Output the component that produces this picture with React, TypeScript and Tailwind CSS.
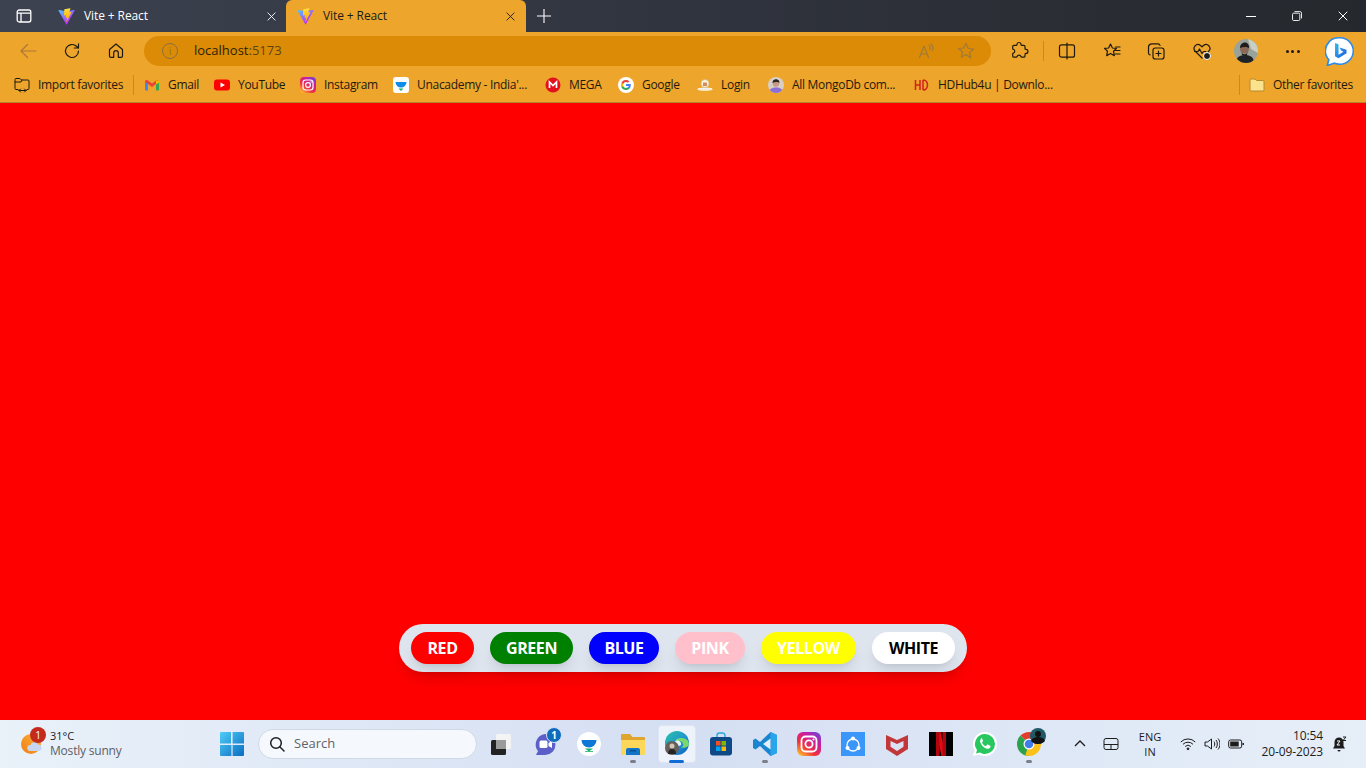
import React from "react";

const stroke = { fill: "none", stroke: "currentColor", strokeWidth: 1.2, strokeLinecap: "round", strokeLinejoin: "round" } as const;

function ViteLogo() {
  return (
    <svg viewBox="0 0 410 404" className="w-[17px] h-[17px] shrink-0">
      <defs>
        <linearGradient id="va" x1="6" y1="33" x2="235" y2="344" gradientUnits="userSpaceOnUse">
          <stop stopColor="#41D1FF" />
          <stop offset="1" stopColor="#BD34FE" />
        </linearGradient>
        <linearGradient id="vb" x1="194" y1="8" x2="236" y2="293" gradientUnits="userSpaceOnUse">
          <stop stopColor="#FFEA83" />
          <stop offset="0.08" stopColor="#FFDD35" />
          <stop offset="1" stopColor="#FFA800" />
        </linearGradient>
      </defs>
      <path d="M399.641 59.5246L215.643 388.545C211.844 395.338 202.084 395.378 198.228 388.618L10.5817 59.5563C6.38087 52.1896 12.6802 43.2665 21.0281 44.7586L205.223 77.6824C206.398 77.8924 207.601 77.8904 208.776 77.6763L389.119 44.8058C397.439 43.2894 403.768 52.1434 399.641 59.5246Z" fill="url(#va)" />
      <path d="M292.965 1.5744L156.801 28.2552C154.563 28.6937 152.906 30.5903 152.771 32.8664L144.395 174.33C144.198 177.662 147.258 180.248 150.51 179.498L188.42 170.749C191.967 169.931 195.172 173.055 194.443 176.622L183.18 231.775C182.422 235.487 185.907 238.661 189.532 237.56L212.947 230.446C216.577 229.344 220.065 232.527 219.297 236.242L201.398 322.875C200.278 328.294 207.486 331.249 210.492 326.603L212.5 323.5L323.454 102.072C325.312 98.3645 322.108 94.137 318.036 94.9228L279.014 102.454C275.347 103.161 272.227 99.746 273.262 96.1583L298.731 7.86689C299.767 4.27314 296.636 0.855181 292.965 1.5744Z" fill="url(#vb)" />
    </svg>
  );
}

function X({ className }: { className: string }) {
  return (
    <svg viewBox="0 0 10 10" className={className} {...stroke} strokeWidth={1}>
      <path d="M1 1l8 8M9 1l-8 8" />
    </svg>
  );
}

function I20({ children, className = "" }: { children: React.ReactNode; className?: string }) {
  return (
    <svg viewBox="0 0 20 20" className={"w-5 h-5 shrink-0 " + className} {...stroke}>
      {children}
    </svg>
  );
}

function TabStrip() {
  return (
    <div className="h-8 shrink-0 flex bg-gradient-to-r from-[#3c4250] via-[#30343e] to-[#25282d] text-white">
      <div className="w-12 h-8 flex items-center shrink-0">
        <svg viewBox="0 0 16 16" className="w-4 h-4 ml-4 shrink-0" fill="none" stroke="currentColor" strokeWidth="1.3">
          <rect x="1.2" y="2" width="13.6" height="12" rx="2" />
          <path d="M1.2 5.2h13.6M5 5.2V14" />
        </svg>
        <div className="w-px h-5 ml-4 bg-[#6a6f7a]" />
      </div>
      <div className="w-[238px] h-8 flex items-center shrink-0 pl-[10px] text-[12px] tracking-[-0.1px]">
        <ViteLogo />
        <span className="ml-[9px] w-[183px] whitespace-nowrap">Vite + React</span>
        <X className="w-[9px] h-[9px] text-white" />
      </div>
      <div className="w-[240px] h-8 flex items-center shrink-0 pl-[11px] text-[12px] tracking-[-0.1px] bg-[#eda52b] rounded-t-[6px] text-[#1c1c1c]">
        <ViteLogo />
        <span className="ml-[9px] w-[183px] whitespace-nowrap">Vite + React</span>
        <X className="w-[9px] h-[9px] text-[#1c1c1c]" />
      </div>
      <div className="w-[35px] flex items-center justify-center shrink-0">
        <svg viewBox="0 0 14 14" className="w-[14px] h-[14px]" fill="none" stroke="white" strokeWidth="1.1">
          <path d="M7 0v14M0 7h14" />
        </svg>
      </div>
      <div className="flex-1" />
      <div className="flex items-center shrink-0">
        <div className="w-[46px] flex justify-center">
          <div className="w-[10px] h-px bg-white" />
        </div>
        <div className="w-[46px] flex justify-center">
          <svg viewBox="0 0 10 10" className="w-[10px] h-[10px]" fill="none" stroke="white" strokeWidth="0.9">
            <rect x="0.5" y="2.2" width="7.3" height="7.3" rx="1.2" />
            <path d="M2.5 .6h5.4a1.6 1.6 0 0 1 1.6 1.6v5.2" />
          </svg>
        </div>
        <div className="w-[46px] flex justify-center">
          <X className="w-[10px] h-[10px] text-white" />
        </div>
      </div>
    </div>
  );
}

function Toolbar() {
  return (
    <div className="h-9 shrink-0 bg-[#eda52b] flex items-center pt-[2px] text-[#1f1a10]">
      <div className="w-[144px] flex items-center shrink-0">
        <div className="w-14 flex justify-center"><I20 className="text-[#a9783a]"><path d="M3 10h15M3 10l6.5-6.5M3 10l6.5 6.5" /></I20></div>
        <div className="w-[32px] flex justify-center"><I20><path d="M16.5 10a6.5 6.5 0 1 1-2-4.7L16.5 7M16.5 2.8V7h-4.2" /></I20></div>
        <div className="w-[56px] flex justify-center"><I20><path d="M3.5 8.5L10 3l6.5 5.5V15a1.3 1.3 0 0 1-1.3 1.3H12.300V12a2.300 2.300 0 0 0-4.600 0v4.300H4.800A1.300 1.300 0 0 1 3.500 15z" /></I20></div>
      </div>
      <div className="w-[847px] h-[30px] rounded-full bg-[#db8b06] flex items-center shrink-0">
        <div className="ml-[18px] w-4 h-4 rounded-full border border-[#8c7040] flex items-center justify-center text-[10px] leading-none text-[#8c7040] shrink-0">i</div>
        <span className="ml-[16px] text-[13px] whitespace-nowrap text-[#2b1f05]">localhost<span className="text-[#5c4614]">:5173</span></span>
        <div className="flex-1" />
        <svg viewBox="0 0 20 20" className="w-5 h-5 shrink-0 text-[#a07a3a]" {...stroke}>
          <path d="M3.500 16.500L8 5l4.500 11.500M5 13h6" />
          <path d="M13 4.500c1.500.8 1.500 3 .7 4M15 3c2.300 1.600 2.300 5 1.300 6.700" />
        </svg>
        <svg viewBox="0 0 20 20" className="w-5 h-5 ml-5 mr-[15px] shrink-0 text-[#a07a3a]" {...stroke}>
          <path d="M10 2.500l2.300 5 5.200.5-4 3.500 1.200 5.300L10 13.500 5.300 16.300l1.200-5.300-4-3.500 5.200-.5z" />
        </svg>
      </div>
      <div className="flex items-center flex-1 min-w-0">
        <div className="w-[56px] flex justify-center">
          <I20><path d="M8 3.500a2 2 0 0 1 4 0c0 .5.500.9 1 .9h1.800c.8 0 1.200.6 1.200 1.200v1.800c0 .5.400 1 .9 1a2 2 0 0 1 0 4c-.5 0-.9.500-.9 1v1.500c0 .8-.5 1.300-1.300 1.300h-2c-.4 0-.7-.3-.8-.7a2 2 0 0 0-3.800 0c-.1.400-.4.700-.8.700H5c-.8 0-1.300-.5-1.300-1.300v-2c0-.4.300-.7.700-.8a2 2 0 0 0 0-3.800c-.4-.1-.7-.4-.7-.8V5.600c0-.7.500-1.200 1.200-1.200H7c.5 0 1-.4 1-.9z" /></I20>
        </div>
        <div className="w-px h-5 bg-[#c48a30] ml-[-4px]" />
        <div className="w-[46px] flex justify-center">
          <I20><rect x="2.500" y="3.800" width="15" height="12.400" rx="2" /><path d="M10 2v16" /></I20>
        </div>
        <div className="w-[43px] flex justify-center">
          <I20><path d="M8.500 3l1.900 4 4.100.4-3 2.800.8 4.500-3.800-2.300-3.800 2.300.8-4.500-3-2.800 4.100-.4z" /><path d="M13 9.500h5M13.500 6h4.500M13 13h5" /></I20>
        </div>
        <div className="w-[46px] flex justify-center">
          <I20><rect x="7" y="7" width="11" height="11" rx="2.300" /><path d="M12.500 10v5M10 12.500h5M14 4.500c-.2-1-1-1.700-2-1.700H6A3.500 3.500 0 0 0 2.500 6.300V12c0 1 .7 1.800 1.700 2" /></I20>
        </div>
        <div className="w-[45px] flex justify-center relative">
          <I20><path d="M10 17L3.500 10.500A4 4 0 0 1 3 5a4 4 0 0 1 5.500-.5L10 5.800l1.500-1.300A4 4 0 0 1 17 5a4 4 0 0 1-.5 5.500l-.8.800" /><path d="M2.500 10.500h3.500l1.500-2.500 2.500 4.500 1.500-2H14" /></I20>
          <div className="absolute left-[24px] top-[11px] w-2 h-2 rounded-full bg-[#1c1c1c] border border-white" />
        </div>
        <div className="w-[44px] flex justify-center">
          <svg viewBox="0 0 24 24" className="w-6 h-6 shrink-0">
            <defs><clipPath id="avc"><circle cx="12" cy="12" r="12" /></clipPath></defs>
            <circle cx="12" cy="12" r="12" fill="#9aa39a" />
            <g clipPath="url(#avc)">
              <path d="M14 0h10v14l-7-4z" fill="#c8cfc4" />
              <path d="M2 24c0-6 4-8 9-8s9 2 9 8z" fill="#202326" />
              <circle cx="10.500" cy="10" r="4.500" fill="#8a6a56" />
              <path d="M6 9c0-4 3-5.500 5-5.500s4.500 2 4 5.500c-2-1.500-6-1.500-9 0z" fill="#1f1c1b" />
              <path d="M7.500 13c1 3 5 3 6 0l-.5 3h-5z" fill="#26201d" />
            </g>
          </svg>
        </div>
        <div className="w-[49px] flex justify-center">
          <div className="flex gap-[2.500px]">
            <div className="w-[3px] h-[3px] rounded-full bg-[#1f1a10]" />
            <div className="w-[3px] h-[3px] rounded-full bg-[#1f1a10]" />
            <div className="w-[3px] h-[3px] rounded-full bg-[#1f1a10]" />
          </div>
        </div>
        <div className="w-[45px] flex justify-center">
          <svg viewBox="0 0 30 30" className="w-[30px] h-[30px] shrink-0">
            <defs>
              <linearGradient id="bg" x1="0" y1="0" x2="1" y2="1">
                <stop stopColor="#36bbf0" />
                <stop offset="1" stopColor="#1c5ad8" />
              </linearGradient>
            </defs>
            <path d="M15 1a14 14 0 0 1 0 28c-2 0-4-.4-5.500-1l-7 2.300c-.6.200-1.200-.3-1-1l1.300-5.500A14 14 0 0 1 15 1z" fill="#2d8ce8" />
            <path d="M15 2.500a12.500 12.500 0 0 1 0 25c-2 0-3.800-.5-5.500-1.200l-6 1.900 1.200-4.700A12.500 12.500 0 0 1 15 2.500z" fill="#ffffff" />
            <path d="M10 7l3.500 1.300v10.500l5-3-2.500-1.200-1.300-3.200 6.800 2.400v3.500l-8 5-3.500-2z" fill="url(#bg)" />
          </svg>
        </div>
      </div>
    </div>
  );
}

const FolderImport = () => (
  <svg viewBox="0 0 16 16" className="w-4 h-4 shrink-0 text-[#1c1a14]" {...stroke} strokeWidth={1}>
    <path d="M4 12.500H2a1 1 0 0 1-1-1V2.500a1 1 0 0 1 1-1h4l1.500 1.500H14a1 1 0 0 1 1 1v7.500a1 1 0 0 1-1 1h-1" />
    <path d="M1 5h6l1-2" />
    <path d="M5 13.500h7M5 13.500l1.500-1.500M5 13.500L6.500 15M12 13.500L10.500 12M12 13.500L10.500 15" />
  </svg>
);
const Gmail = () => (
  <svg viewBox="0 0 16 16" className="w-4 h-4 shrink-0">
    <path d="M1 13.500V4l3 2v7.500H2a1 1 0 0 1-1-1z" fill="#4285f4" />
    <path d="M15 13.500V4l-3 2v7.500h2a1 1 0 0 0 1-1z" fill="#34a853" />
    <path d="M1 4.500C1 3 2.500 2.500 3.500 3.200L8 6.500l4.500-3.300C13.500 2.500 15 3 15 4.500L12 7 8 10 4 7z" fill="#ea4335" />
    <path d="M12 3.600L15 3.500V5.500L12 7.500z" fill="#fbbc04" />
  </svg>
);
const YouTube = () => (
  <svg viewBox="0 0 16 16" className="w-4 h-4 shrink-0">
    <rect x="0" y="2.500" width="16" height="11" rx="3" fill="#ff0000" />
    <path d="M6.500 5.500l4.500 2.500-4.500 2.500z" fill="#fff" />
  </svg>
);
const InstaGrad = ({ id, className }: { id: string; className: string }) => (
  <svg viewBox="0 0 24 24" className={className}>
    <defs>
      <linearGradient id={id} x1="0.1" y1="1" x2="0.9" y2="0">
        <stop stopColor="#fdc52f" />
        <stop offset="0.35" stopColor="#f0323c" />
        <stop offset="0.7" stopColor="#c71ea5" />
        <stop offset="1" stopColor="#6a47d8" />
      </linearGradient>
    </defs>
    <rect width="24" height="24" rx="6" fill={`url(#${id})`} />
    <rect x="4.500" y="4.500" width="15" height="15" rx="4" fill="none" stroke="#fff" strokeWidth="1.800" />
    <circle cx="12" cy="12" r="3.600" fill="none" stroke="#fff" strokeWidth="1.800" />
    <circle cx="16.500" cy="7.500" r="1.100" fill="#fff" />
  </svg>
);
const Unacademy = () => (
  <svg viewBox="0 0 16 16" className="w-4 h-4 shrink-0">
    <rect width="16" height="16" rx="3" fill="#fff" />
    <path d="M2.500 5h11a5.500 5.500 0 0 1-11 0z" fill="#0f8ce9" />
    <path d="M5.500 11.500h5L8 14z" fill="#18b36b" />
  </svg>
);
const Mega = () => (
  <svg viewBox="0 0 16 16" className="w-4 h-4 shrink-0">
    <circle cx="8" cy="8" r="7.500" fill="#e3101e" />
    <path d="M4.500 11V5l3.500 3.500L11.500 5v6" fill="none" stroke="#fff" strokeWidth="1.700" />
  </svg>
);
const Google = () => (
  <svg viewBox="0 0 16 16" className="w-4 h-4 shrink-0">
    <circle cx="8" cy="8" r="8" fill="#fff" />
    <path d="M12.800 8.100c0-.4 0-.7-.1-1H8v1.900h2.700c-.1.700-.5 1.200-1 1.500v1.300h1.600c1-.9 1.500-2.200 1.500-3.700z" fill="#4285f4" />
    <path d="M8 13c1.300 0 2.400-.4 3.300-1.200l-1.600-1.300c-.4.300-1 .5-1.700.5-1.300 0-2.400-.9-2.800-2H3.500v1.300C4.300 12 6 13 8 13z" fill="#34a853" />
    <path d="M5.200 9c-.2-.6-.2-1.300 0-2V5.700H3.500a5 5 0 0 0 0 4.600z" fill="#fbbc04" />
    <path d="M8 5c.7 0 1.400.3 1.900.7l1.400-1.400A5 5 0 0 0 3.500 5.700L5.200 7C5.600 5.800 6.700 5 8 5z" fill="#ea4335" />
  </svg>
);
const Login = () => (
  <svg viewBox="0 0 16 16" className="w-4 h-4 shrink-0">
    <path d="M0 12.500c2-1.500 4-2 8-2s6 .5 8 2c-2 1-5 1.500-8 1.500s-6-.5-8-1.500z" fill="#f7e5b5" />
    <circle cx="8" cy="6.500" r="4" fill="#fff6df" stroke="#c9b27e" strokeWidth="0.700" />
    <rect x="6" y="5.500" width="4" height="3.500" fill="#d18d5b" />
    <path d="M1 11h14v1.500H1z" fill="#f3f1ea" />
  </svg>
);
const Mongo = () => (
  <svg viewBox="0 0 16 16" className="w-4 h-4 shrink-0">
    <defs><clipPath id="mc"><circle cx="8" cy="8" r="8" /></clipPath></defs>
    <circle cx="8" cy="8" r="8" fill="#d8cfc6" />
    <g clipPath="url(#mc)">
      <path d="M1 16c0-4 3-5.500 7-5.500s7 1.500 7 5.500z" fill="#8a6fd8" />
      <circle cx="8" cy="6.500" r="3.200" fill="#c89a80" />
      <path d="M4.500 6c0-3 2-3.800 3.500-3.800S11.500 3 11.500 6c-1.500-1.200-5-1.200-7 0z" fill="#2a2220" />
    </g>
  </svg>
);
const HD = () => (
  <svg viewBox="0 0 16 16" className="w-4 h-4 shrink-0" fill="none" stroke="#d4201a" strokeWidth="1.500">
    <path d="M1.500 3v10M6 3v10M1.500 8H6M9 3v10M9 3c6 0 6 10 0 10" />
  </svg>
);
const FolderYellow = () => (
  <svg viewBox="0 0 16 16" className="w-4 h-4 shrink-0">
    <path d="M1 3a1 1 0 0 1 1-1h4l1.500 1.500H14a1 1 0 0 1 1 1v8.500a1 1 0 0 1-1 1H2a1 1 0 0 1-1-1z" fill="#fbe38e" stroke="#b8892f" strokeWidth="1" />
  </svg>
);

const bookmarks = [
  { label: "Gmail", icon: <Gmail />, w: "w-[46px]" },
  { label: "YouTube", icon: <YouTube />, w: "w-[62px]" },
  { label: "Instagram", icon: <InstaGrad id="ibm" className="w-4 h-4 shrink-0" />, w: "w-[69px]" },
  { label: "Unacademy - India'...", icon: <Unacademy />, w: "w-[128px]" },
  { label: "MEGA", icon: <Mega />, w: "w-[49px]" },
  { label: "Google", icon: <Google />, w: "w-[55px]" },
  { label: "Login", icon: <Login />, w: "w-[47px]" },
  { label: "All MongoDb com...", icon: <Mongo />, w: "w-[122px]" },
  { label: "HDHub4u | Downlo...", icon: <HD />, w: "w-[136px]" },
];

function Bookmark({ icon, label, w }: { icon: React.ReactNode; label: string; w: string }) {
  return (
    <div className="flex items-center shrink-0">
      {icon}
      <span className={"ml-2 whitespace-nowrap " + w}>{label}</span>
    </div>
  );
}

function BookmarksBar() {
  return (
    <div className="h-[35px] shrink-0 bg-[#eda52b] border-b border-[#b9842b] flex items-center pl-[14px] text-[12px] tracking-[-0.3px] text-[#1f1a10]">
      <Bookmark icon={<FolderImport />} label="Import favorites" w="w-[85px]" />
      <div className="w-px h-5 bg-[#c48a30] mx-[10px] shrink-0" />
      <div className="flex">
        {bookmarks.map((b) => <Bookmark key={b.label} {...b} />)}
      </div>
      <div className="flex-1" />
      <div className="w-px h-5 bg-[#c48a30] mr-[9px] shrink-0" />
      <Bookmark icon={<FolderYellow />} label="Other favorites" w="w-[93px]" />
    </div>
  );
}

const colors = [
  { n: "RED", c: "bg-[#ff0000] text-white", w: "w-[63px]" },
  { n: "GREEN", c: "bg-[#008000] text-white", w: "w-[83px]" },
  { n: "BLUE", c: "bg-[#0000ff] text-white", w: "w-[70px]" },
  { n: "PINK", c: "bg-[#ffc0cb] text-white", w: "w-[70px]" },
  { n: "YELLOW", c: "bg-[#ffff00] text-white", w: "w-[95px]" },
  { n: "WHITE", c: "bg-white text-black", w: "w-[83px]" },
];

function Stage() {
  return (
    <div className="flex-1 min-h-0 bg-[#ff0000] flex items-end justify-center pb-12">
      <div className="flex items-center gap-4 h-12 px-3 rounded-3xl bg-[#dfe5ef] shadow-lg">
        {colors.map((c) => (
          <button key={c.n} className={"h-8 rounded-full shadow-lg font-bold text-[16px] tracking-[-0.4px] flex items-center justify-center " + c.c + " " + c.w}>
            {c.n}
          </button>
        ))}
      </div>
    </div>
  );
}

const Slot = ({ children, className = "" }: { children: React.ReactNode; className?: string }) => (
  <div className={"relative w-11 h-12 flex items-center justify-center shrink-0 " + className}>{children}</div>
);
const Pip = () => <div className="absolute bottom-[5px] left-[19px] w-[6px] h-[3px] rounded-full bg-[#7a7f88]" />;

function Taskbar() {
  return (
    <div className="h-12 shrink-0 flex items-center bg-gradient-to-r from-[#e9f1f9] via-[#d5dff3] to-[#e6eff8] text-[#1c1c1c]">
      <div className="w-[210px] h-12 flex items-center pl-[21px] shrink-0">
        <div className="relative w-[22px] h-[22px] shrink-0">
          <svg viewBox="0 0 22 22" className="w-[22px] h-[22px]">
            <defs>
              <linearGradient id="sun" x1="0" y1="1" x2="1" y2="0">
                <stop stopColor="#ef7d12" />
                <stop offset="1" stopColor="#fcb53a" />
              </linearGradient>
            </defs>
            <circle cx="10" cy="11" r="10" fill="url(#sun)" />
            <path d="M9 18a3 3 0 0 1 .5-6 4 4 0 0 1 7.500-.5 3.300 3.300 0 0 1 1 6.500z" fill="#c6d6f2" />
          </svg>
          <div className="absolute left-[9px] top-[-6px] w-4 h-4 rounded-full bg-[#c42b1c] text-white text-[10px] flex items-center justify-center leading-none">1</div>
        </div>
        <div className="ml-[7px] mt-[-2px] leading-[15px] text-[11px] whitespace-nowrap">
          <div className="text-[#1c1c1c]">31°C</div>
          <div className="text-[#5d5f66] text-[12px] tracking-[-0.2px]">Mostly sunny</div>
        </div>
      </div>
      <Slot>
        <svg viewBox="0 0 24 24" className="w-6 h-6">
          <defs>
            <linearGradient id="win" x1="0" y1="0" x2="1" y2="1">
              <stop stopColor="#4fcdf7" />
              <stop offset="1" stopColor="#0a6cc2" />
            </linearGradient>
          </defs>
          <path d="M0 1a1 1 0 0 1 1-1h10v11.400H0zM12.600 0H23a1 1 0 0 1 1 1v10.400H12.600zM0 13h11.400v11H1a1 1 0 0 1-1-1zM12.600 13H24v10a1 1 0 0 1-1 1H12.600z" fill="url(#win)" />
        </svg>
      </Slot>
      <div className="ml-1 mr-[2px] w-[219px] h-[30px] rounded-full bg-[#f5f8fd] border border-[#d2d9e6] flex items-center pl-[10px] shrink-0">
        <svg viewBox="0 0 16 16" className="w-4 h-4 shrink-0" fill="none" stroke="#1c1c1c" strokeWidth="1.500" strokeLinecap="round">
          <circle cx="7" cy="7" r="5.300" />
          <path d="M11 11l4 4" />
        </svg>
        <span className="ml-[9px] text-[13px] text-[#5f6368]">Search</span>
      </div>
      <Slot>
        <svg viewBox="0 0 24 24" className="w-6 h-6">
          <rect x="7" y="2" width="15" height="15" rx="1.500" fill="#f4f4f4" />
          <rect x="2" y="8" width="15" height="15" rx="1.500" fill="#222" />
          <rect x="7" y="8" width="10" height="9" fill="#9b9b9b" />
        </svg>
      </Slot>
      <Slot>
        <svg viewBox="0 0 24 24" className="w-6 h-6">
          <path d="M12 2a10.500 10.500 0 0 1 0 21H3l2-4A10.500 10.500 0 0 1 12 2z" fill="#5b5fc7" />
          <rect x="6.500" y="8.500" width="8" height="7.500" rx="1.500" fill="#fff" />
          <path d="M15.500 11l3.500-2v7l-3.500-2z" fill="#fff" />
        </svg>
        <div className="absolute left-[23px] top-[7px] w-4 h-4 rounded-full bg-[#0f6cbd] border border-[#d8e2f4] text-white text-[10px] font-bold flex items-center justify-center leading-none">1</div>
      </Slot>
      <Slot>
        <svg viewBox="0 0 24 24" className="w-6 h-6">
          <circle cx="12" cy="12" r="12" fill="#fff" />
          <path d="M4.500 8h15a7.500 7.500 0 0 1-15 0z" fill="#0f78d6" />
          <path d="M8 16.500h8L12 19.500z" fill="#18b36b" />
          <path d="M8 19h8v.800H8z" fill="#18b36b" />
        </svg>
      </Slot>
      <Slot>
        <svg viewBox="0 0 24 24" className="w-6 h-6">
          <path d="M0 3a1 1 0 0 1 1-1h8l2.500 3H23a1 1 0 0 1 1 1v3H0z" fill="#e0a52d" />
          <path d="M0 8h24v14a1 1 0 0 1-1 1H1a1 1 0 0 1-1-1z" fill="#fcd75a" />
          <path d="M5 18a2 2 0 0 1 2-2h10a2 2 0 0 1 2 2v5H5z" fill="#1175c7" />
          <rect x="9" y="18" width="6" height="1.500" fill="#0a4c8c" />
        </svg>
        <Pip />
      </Slot>
      <Slot>
        <div className="absolute left-[3px] top-[5px] w-[38px] h-[38px] rounded-[4px] bg-[#eef3fb] border border-[#dfe6f3]" />
        <svg viewBox="0 0 24 24" className="relative w-6 h-6 mt-[-3px]">
          <defs>
            <linearGradient id="edge" x1="0" y1="0" x2="1" y2="1">
              <stop stopColor="#2fc4a2" />
              <stop offset="0.6" stopColor="#1c8fd6" />
              <stop offset="1" stopColor="#0f5bb0" />
            </linearGradient>
          </defs>
          <circle cx="12" cy="12" r="12" fill="url(#edge)" />
          <path d="M24 13c0-4-4-6-8-6-5 0-6 3-6 5 2-3 7-3 8 1 1 2-1 3-2 3.500 3 1 8-.5 8-3.500z" fill="#79d96b" />
          <path d="M12 9.500c3 0 4.500 2 4 4.500-3 2-6 .5-6.500-2 .5-1.500 1.500-2.500 2.500-2.500z" fill="#e8f5fa" />
          <circle cx="7" cy="17" r="7" fill="#66605a" />
          <circle cx="7" cy="15" r="2.500" fill="#d4c7b8" />
          <path d="M3 23c0-4 2-5 4-5s4 1 4 5z" fill="#272523" />
        </svg>
        <div className="absolute bottom-[5px] left-[14px] w-[15px] h-[3px] rounded-full bg-[#0f6cd6]" />
      </Slot>
      <Slot>
        <svg viewBox="0 0 24 24" className="w-6 h-6">
          <path d="M8 6V3.500A2.500 2.500 0 0 1 10.500 1h3A2.500 2.500 0 0 1 16 3.500V6" fill="none" stroke="#2aa7e0" strokeWidth="1.400" />
          <rect x="1" y="5" width="22" height="18.500" rx="3" fill="#0f4a86" />
          <rect x="7" y="9" width="4.500" height="4.500" fill="#f25022" />
          <rect x="12.500" y="9" width="4.500" height="4.500" fill="#7fba00" />
          <rect x="7" y="14.500" width="4.500" height="4.500" fill="#00a4ef" />
          <rect x="12.500" y="14.500" width="4.500" height="4.500" fill="#ffb900" />
        </svg>
      </Slot>
      <Slot>
        <svg viewBox="0 0 24 24" className="w-6 h-6">
          <path d="M17.500 0L24 3v18l-6.500 3L7 14l-4.500 3.500L0 16V8l2.500-1.500L7 10z" fill="#1a86d0" />
          <path d="M17.500 0L24 3v18l-6.500 3z" fill="#2aa5ec" />
          <path d="M17.500 6.500L10 12l7.500 5.500z" fill="#e3eefa" />
        </svg>
        <Pip />
      </Slot>
      <Slot><InstaGrad id="itb" className="w-6 h-6" /></Slot>
      <Slot>
        <svg viewBox="0 0 24 24" className="w-6 h-6">
          <rect width="24" height="24" fill="#3a96f8" />
          <circle cx="12" cy="13" r="6" fill="none" stroke="#fff" strokeWidth="1.300" />
          <circle cx="12" cy="6.500" r="2" fill="#fff" />
          <circle cx="6.500" cy="16" r="2" fill="#fff" />
          <circle cx="17.500" cy="16" r="2" fill="#fff" />
        </svg>
      </Slot>
      <Slot>
        <svg viewBox="0 0 22 24" className="w-[22px] h-6">
          <path d="M0 3l11 5 11-5v14l-11 7-11-7z" fill="#c2383a" />
          <path d="M4.500 9l6.500 3 6.500-3v5.800L11 19l-6.500-4.200z" fill="#dbe3f3" />
        </svg>
      </Slot>
      <Slot>
        <svg viewBox="0 0 24 24" className="w-6 h-6">
          <rect width="24" height="24" fill="#000" />
          <path d="M7 0h4.500L17 24h-4.500z" fill="#e50914" />
          <path d="M7 0h3.500v24L7 24zM13.500 0H17v24h-3.500z" fill="#b1060f" />
        </svg>
      </Slot>
      <Slot>
        <svg viewBox="0 0 24 24" className="w-6 h-6">
          <path d="M12 0a12 12 0 0 1 0 24c-2 0-4-.5-5.800-1.500L0 24l1.600-6A12 12 0 0 1 12 0z" fill="#fff" />
          <path d="M12 2a10 10 0 0 1 0 20c-2 0-3.800-.6-5.300-1.500l-3.700 1 1-3.500A10 10 0 0 1 12 2z" fill="#29c760" />
          <path d="M8.500 6.500c-1 .5-1.800 2-1.300 3.700 1 3 3.500 5.300 6.500 6.500 1.800.3 3.300-.5 3.800-1.800.2-.7-.1-1-.6-1.300l-2-1c-.5-.2-.8 0-1 .3l-.7.9c-.3.300-.6.300-1 .1-1.200-.6-2.300-1.700-3-3-.2-.3-.1-.6.100-.8l.6-.8c.2-.3.200-.6 0-.9l-.8-2c-.2-.5-.6-.7-1-.6z" fill="#fff" />
        </svg>
      </Slot>
      <Slot>
        <svg viewBox="0 0 29 28" className="w-[29px] h-[28px] shrink-0 ml-[4px] mt-[-4px]">
          <defs><clipPath id="chrc"><circle cx="12" cy="16" r="12" /></clipPath></defs>
          <g clipPath="url(#chrc)">
            <path d="M12 16L0 4h24v12z" fill="#e33b2e" />
            <path d="M12 16L0 4v24h12z" fill="#2ba24c" />
            <path d="M12 16h12v12H8z" fill="#fbc116" />
          </g>
          <circle cx="12" cy="16" r="5.500" fill="#fff" />
          <circle cx="12" cy="16" r="4.300" fill="#3f7de8" />
          <circle cx="21" cy="8" r="8" fill="#1e5a66" />
          <circle cx="21" cy="6" r="3" fill="#111" />
          <path d="M14 13c1-3 4-4 7-4s6 1 7 4c-2 2-4 3-7 3s-5-1-7-3z" fill="#111" />
        </svg>
        <Pip />
      </Slot>
      <div className="flex-1" />
      <div className="flex items-center h-12 shrink-0 text-[#1c1c1c]">
        <svg viewBox="0 0 12 12" className="w-3 h-3 shrink-0" fill="none" stroke="#1c1c1c" strokeWidth="1.300"><path d="M1 8l5-5 5 5" /></svg>
        <svg viewBox="0 0 16 16" className="w-4 h-4 shrink-0 ml-[17px]" fill="none" stroke="#1c1c1c" strokeWidth="1"><rect x="1" y="2.500" width="14" height="11" rx="2" /><path d="M1 8.500h14M8 8.500v5" /></svg>
        <div className="w-[38px] ml-[12px] text-center text-[11px] leading-[15.500px] shrink-0">
          <div>ENG</div>
          <div>IN</div>
        </div>
        <svg viewBox="0 0 16 16" className="w-4 h-4 shrink-0 ml-[11px]" fill="none" stroke="#1c1c1c" strokeWidth="1"><path d="M.8 6a10 10 0 0 1 14.400 0M3 8.300a7 7 0 0 1 10 0M5.200 10.500a4 4 0 0 1 5.600 0" /><circle cx="8" cy="12.800" r=".9" fill="#1c1c1c" /></svg>
        <svg viewBox="0 0 16 16" className="w-4 h-4 shrink-0 ml-[8px]" fill="none" stroke="#1c1c1c" strokeWidth="1"><path d="M1 6h2.500L7.500 3v10l-4-3H1z" /><path d="M10 5.500c1 1.300 1 3.700 0 5M12 4c1.800 2 1.800 6 0 8M14 2.500c2.600 3 2.600 8 0 11" /></svg>
        <svg viewBox="0 0 16 16" className="w-4 h-4 shrink-0 ml-[8px]" fill="none" stroke="#1c1c1c" strokeWidth="1"><rect x=".7" y="4" width="13" height="8" rx="1.800" /><rect x="2.200" y="5.500" width="8.500" height="5" fill="#1c1c1c" stroke="none" /><path d="M15.200 7v2" strokeWidth="1.500" /></svg>
        <div className="w-[71px] ml-[8px] text-right text-[12px] tracking-[-0.1px] leading-[16px] shrink-0">
          <div>10:54</div>
          <div>20-09-2023</div>
        </div>
        <svg viewBox="0 0 16 16" className="w-4 h-4 shrink-0 ml-[8px] mr-[19px]">
          <path d="M8 1.500a4.500 4.500 0 0 1 4.500 4.500v4l1.500 2.500H2L3.500 10V6A4.500 4.500 0 0 1 8 1.500z" fill="#1c1c1c" />
          <path d="M6.500 14a1.500 1.500 0 0 0 3 0z" fill="#1c1c1c" />
          <path d="M6 5h3L6 9h3" stroke="#fff" strokeWidth="1" fill="none" />
          <path d="M12 1h3l-3 3.500h3" stroke="#1c1c1c" strokeWidth="1" fill="none" />
        </svg>
      </div>
    </div>
  );
}

export default function App() {
  return (
    <div className="w-full h-screen overflow-hidden flex flex-col font-['Open_Sans','Noto_Sans',sans-serif]">
      <TabStrip />
      <Toolbar />
      <BookmarksBar />
      <Stage />
      <Taskbar />
    </div>
  );
}
